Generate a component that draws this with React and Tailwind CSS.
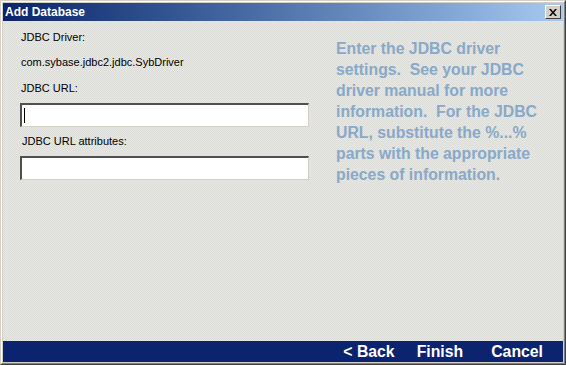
import React from "react";

const helpLines = [
  "Enter the JDBC driver",
  "settings.  See your JDBC",
  "driver manual for more",
  "information.  For the JDBC",
  "URL, substitute the %...%",
  "parts with the appropriate",
  "pieces of information.",
];

// fine dotted texture of the dialog body
const texture =
  "bg-[conic-gradient(#e7e7e3_25%,#dcdcd8_0_50%,#e7e7e3_0_75%,#dcdcd8_0)] bg-[length:2px_2px]";

const Field = () => (
  <div className="h-[24px] w-[289px] border-t-2 border-l-2 border-t-[#505050] border-l-[#505050] border-b border-r border-b-[#d4d0c8] border-r-[#d4d0c8] bg-white" />
);

const App = () => {
  return (
    <div
      className="w-[566px] h-[365px] border-t border-l border-t-[#d4d0c8] border-l-[#d4d0c8] border-b border-r border-b-[#404040] border-r-[#404040] bg-[#d4d0c8]"
      style={{ fontFamily: '"Liberation Sans", Arial, sans-serif' }}
    >
      <div className="h-full border-t border-l border-t-white border-l-white border-b border-r border-b-[#808080] border-r-[#808080] p-px flex flex-col">
        {/* title bar */}
        <div className="h-[18px] flex items-center justify-between bg-gradient-to-r from-[#0a246a] to-[#a6caf0] pl-[2px] pr-[2px]">
          <span className="text-white font-bold text-[12px] leading-none">Add Database</span>
          <button className="w-[16px] h-[14px] bg-[#d4d0c8] border-t border-l border-t-white border-l-white border-b border-r border-b-[#404040] border-r-[#404040] flex items-center justify-center">
            <svg width="8" height="7" viewBox="0 0 8 7">
              <path d="M0 0h2l2 2.5L6 0h2L5 3.5 8 7H6L4 4.5 2 7H0l3-3.5z" fill="#000" />
            </svg>
          </button>
        </div>

        {/* body */}
        <div className={`flex-1 flex ${texture}`}>
          <div className="w-[316px] pl-[17px] pt-[10px] text-[11px] leading-[13px] text-black">
            <div className="pl-px">JDBC Driver:</div>
            <div className="mt-[12px] pl-px">com.sybase.jdbc2.jdbc.SybDriver</div>
            <div className="mt-[13px] pl-px">JDBC URL:</div>
            <div className="mt-[8px] relative">
              <Field />
              <div className="absolute left-[4px] top-[5px] w-px h-[15px] bg-black" />
            </div>
            <div className="mt-[8px] pl-[2px]">JDBC URL attributes:</div>
            <div className="mt-[8px]">
              <Field />
            </div>
          </div>
          <div className="pt-[17px] pl-[17px] text-[15.8px] leading-[21px] font-bold text-[#88a9c9]">
            {helpLines.map((line) => (
              <div key={line} className="whitespace-pre">
                {line}
              </div>
            ))}
          </div>
        </div>

        {/* bottom nav */}
        <div className="h-[21px] bg-[#0c2470] flex items-center justify-end pr-[20px] text-white font-bold text-[15.8px] leading-none">
          <span className="mr-[22px]">&lt; Back</span>
          <span className="mr-[28px]">Finish</span>
          <span>Cancel</span>
        </div>
      </div>
    </div>
  );
};

export default App;
